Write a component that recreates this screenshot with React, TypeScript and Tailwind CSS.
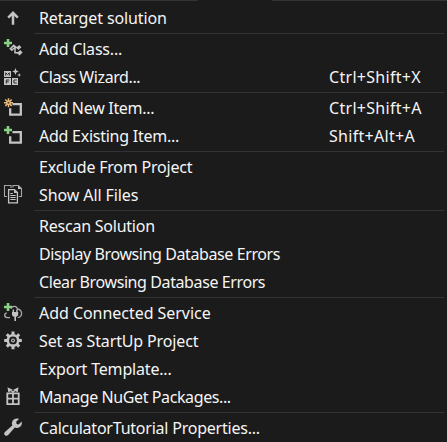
import type { ReactNode } from "react";

const GREY = "#c4c4c4";
const GREEN = "#89d185";

type Item = { label: string; track: string; icon?: ReactNode; keys?: string };

const Plus = ({ y }: { y: number }) => (
  <path d={`M8 ${y - 4}v8M4 ${y}h8`} stroke={GREEN} strokeWidth="2.6" fill="none" />
);

const arrowUp = <path d="M13 20.7V9M8.2 13.6L13 8.8l4.8 4.8" stroke={GREY} strokeWidth="2.5" fill="none" />;

const addClass = (
  <>
    <g stroke={GREY} fill="none" strokeWidth="1.5">
      <path d="M10.8 14.2l3-3M13 12.6h5.5M15 12.6v5.2h3.5" />
    </g>
    <g fill={GREY}>
      <path d="M9.2 13.8l4.6-4.6 2.6 2.6-4.6 4.4z" />
      <path d="M16.4 12.8l2.8-2.8 2.2 2.2-3 2.8z" />
      <path d="M17 18l3.2-3 2.4 2.4-3.2 3z" />
    </g>
    <path d="M12 13.7l1.8-1.8" stroke="#1b1b1b" strokeWidth="1" />
    <Plus y={8} />
  </>
);

const wizard = (
  <>
    <path fill={GREY} d="M4 8h7v6H4zM4 15h7v7H4zM12 15h6v7h-6z" />
    <path
      d="M5.7 12.7V9.8l1.8 1.7 1.8-1.7v2.9M9.2 17H6.3v3.6M6.3 18.8h2.4M16.8 17h-2.9v3h2.9"
      stroke="#303030"
      strokeWidth="1"
      fill="none"
    />
    <path
      fill={GREY}
      d="M15.5 5l.9 2.5 2.4 1-2.4 1-.9 2.5-.9-2.5-2.4-1 2.4-1zM19.2 9.9l.6 1.5 1.5.6-1.5.6-.6 1.5-.6-1.5-1.5-.6 1.5-.6z"
    />
  </>
);

const square = <path d="M12.4 10.2h8.4v10.4H10.2v-6.4" stroke={GREY} strokeWidth="2.3" fill="none" />;

const addNew = (
  <>
    {square}
    <path
      d="M8.5 4.2v9M4 8.7h9M5.3 5.5l6.4 6.4M11.7 5.5l-6.4 6.4"
      stroke="#edbd7d"
      strokeWidth="1.5"
      fill="none"
    />
    <circle cx="8.5" cy="8.7" r="1" fill="#5c4828" />
  </>
);

const addExisting = (
  <>
    {square}
    <Plus y={8} />
  </>
);

const files = (
  <>
    <path
      d="M7 15.5H4.5v-11H11V7M13 6.5v-2h5.5l3 3v8h-2.8"
      stroke="#a5a5a5"
      strokeWidth="1.1"
      fill="none"
    />
    <path d="M18 4.5V8h3.5z" fill={GREY} />
    <path d="M8.6 8.6h5.8l3 3v10.3H8.6z" stroke={GREY} strokeWidth="1.3" fill="#1b1b1b" />
    <path d="M14 8.6v3.4h3.4z" fill={GREY} />
    <path d="M10.3 12.5h2.5M10.3 14.5h5.4M10.3 16.5h5.4M10.3 18.5h5.4" stroke={GREY} strokeWidth="1" />
  </>
);

const service = (
  <>
    <path
      d="M10 18.6H7.2c-3.2-.4-3.4-4-.4-4.8M11 9.4c1.4-3 5.8-2.6 6.4.6 3 .2 4.4 2.6 4.2 4.8-.2 2.2-1.6 3.6-3.8 3.8"
      stroke="#ababab"
      strokeWidth="1.3"
      fill="none"
    />
    <path fill={GREY} d="M12.6 10.5h1.4V13h2.2v-2.5h1.4V13h.6v2.2c0 1.3-.8 2.2-2.2 2.5V22h-1.6v-4.3c-1.6-.3-2.4-1.2-2.4-2.5V13h.6z" />
    <Plus y={8} />
  </>
);

const gear = (
  <>
    <g stroke={GREY} strokeWidth="3">
      <path d="M13 4.6v17.6M4.2 13.4h17.6M6.8 7.2l12.4 12.4M19.2 7.2L6.8 19.6" />
    </g>
    <circle cx="13" cy="13.4" r="6.5" fill={GREY} />
    <circle cx="13" cy="13.4" r="3.9" fill="#1b1b1b" />
    <circle cx="13" cy="13.4" r="2" fill={GREY} />
    <circle cx="13" cy="13.4" r=".9" fill="#1b1b1b" />
  </>
);

const gift = (
  <>
    <path d="M7.3 10.3h11.4v10.8H7.3zM13 10.3v10.8M7 15.7h12" stroke={GREY} strokeWidth="1.8" fill="none" />
    <path d="M8.2 5.2l3.6 1.7-3 1.5zM17.8 5.2l-3.6 1.7 3 1.5zM13 9.5l-2.8-3M13 9.5l2.8-3" stroke={GREY} strokeWidth="1.1" fill={GREY} />
  </>
);

const wrench = (
  <path
    fill={GREY}
    d="M19 4.9l-2.8 2.9.4 2.2 2.1.4 2.9-2.8c1 3.3-1.2 6.4-4.8 6.3-.8 0-1.4-.1-2-.3l-6.6 7.4c-2.2 2.2-5.4-.8-3.3-3.1l7.4-6.5c-1.5-4.1 2-8 6.7-6.5z"
  />
);

const groups: Item[][] = [
  [{ label: "Retarget solution", track: "tracking-[-0.12px]", icon: arrowUp }],
  [
    { label: "Add Class...", track: "tracking-[-0.2px]", icon: addClass },
    { label: "Class Wizard...", track: "tracking-[-0.4px]", icon: wizard, keys: "Ctrl+Shift+X" },
  ],
  [
    { label: "Add New Item...", track: "tracking-[-0.3px]", icon: addNew, keys: "Ctrl+Shift+A" },
    { label: "Add Existing Item...", track: "tracking-[-0.25px]", icon: addExisting, keys: "Shift+Alt+A" },
  ],
  [
    { label: "Exclude From Project", track: "tracking-[-0.2px]" },
    { label: "Show All Files", track: "tracking-[-0.1px]", icon: files },
  ],
  [
    { label: "Rescan Solution", track: "tracking-[-0.23px]" },
    { label: "Display Browsing Database Errors", track: "tracking-[-0.4px]" },
    { label: "Clear Browsing Database Errors", track: "tracking-[-0.4px]" },
  ],
  [
    { label: "Add Connected Service", track: "tracking-[-0.04px]", icon: service },
    { label: "Set as StartUp Project", track: "tracking-[-0.14px]", icon: gear },
    { label: "Export Template...", track: "tracking-[-0.18px]" },
    { label: "Manage NuGet Packages...", track: "tracking-[-0.4px]", icon: gift },
  ],
  [{ label: "CalculatorTutorial Properties...", track: "tracking-[-0.22px]", icon: wrench }],
];

export default function App() {
  return (
    <div className="h-[442px] w-[447px] overflow-hidden bg-[#1b1b1b] font-['Noto_Sans',sans-serif] text-base text-[#f5f5f5]">
      <div className="flex h-1 justify-between">
        <div className="h-px w-[198px] bg-[#333337]" />
        <div className="h-px w-[175px] bg-[#333337]" />
      </div>
      {groups.map((group, i) => (
        <div key={i}>
          {i > 0 && (
            <div className="h-[3px] pt-px pr-[3px] pl-[34px]">
              <div className="h-px bg-[#333337]" />
            </div>
          )}
          {group.map((item) => (
            <div key={item.label} className="flex h-7 items-center">
              <svg width="30" height="28" viewBox="0 0 30 28" className="mr-[9px] shrink-0">
                {item.icon}
              </svg>
              <span className={`w-[290px] whitespace-nowrap leading-7 ${item.track}`}>{item.label}</span>
              {item.keys && <span className="whitespace-nowrap leading-7 tracking-[0.3px]">{item.keys}</span>}
            </div>
          ))}
        </div>
      ))}
    </div>
  );
}
